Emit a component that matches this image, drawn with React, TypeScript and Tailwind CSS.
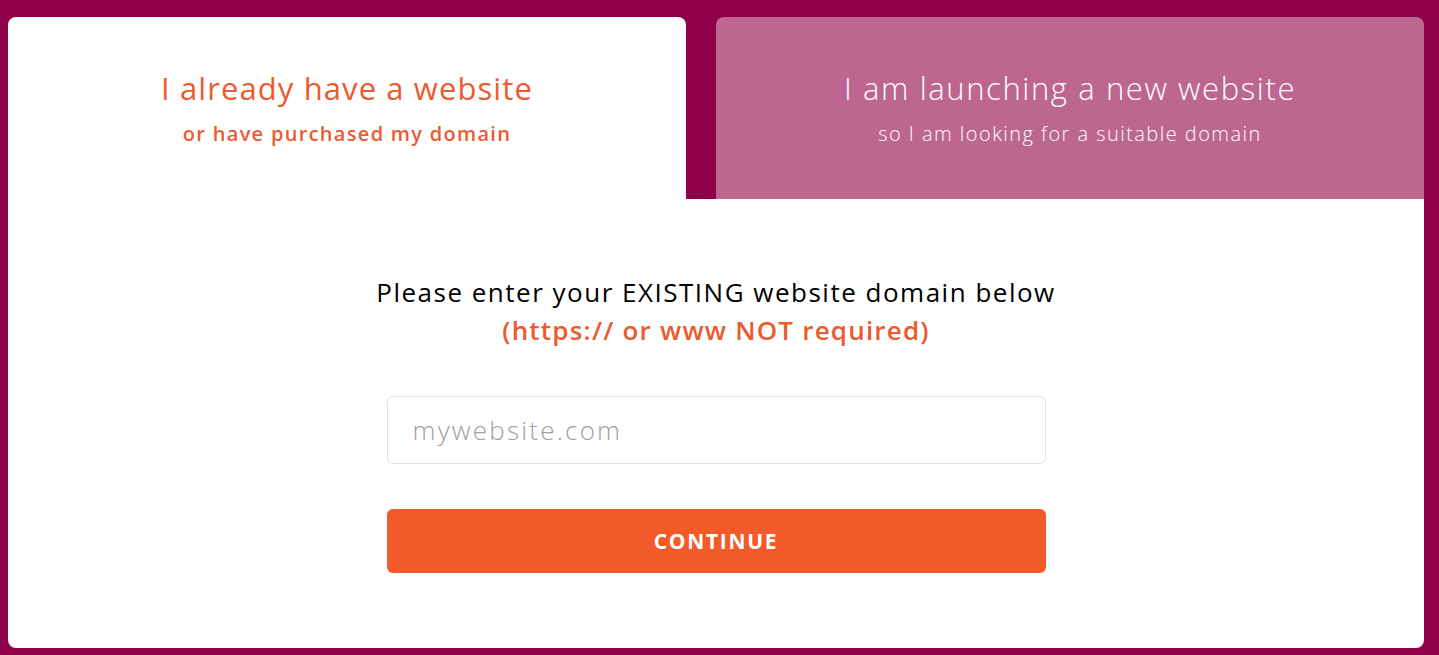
export default function App() {
  return (
    <div
      className="min-h-screen bg-[#8e0049] pt-[17px] pl-2 pr-[15px] pb-[7px]"
      style={{ fontFamily: '"Open Sans", "Liberation Sans", sans-serif' }}
    >
      {/* tabs */}
      <div className="flex gap-[30px]">
        <div className="w-[678px] h-[182px] bg-white rounded-t-lg flex flex-col items-center pt-[52px]">
          <h2 className="text-[31px] leading-[38px] font-medium tracking-[1.1px] text-[#ec5a30]">
            I already have a website
          </h2>
          <p className="mt-[14px] text-[20px] leading-[26px] font-semibold tracking-[1.3px] text-[#ec5a30]">
            or have purchased my domain
          </p>
        </div>
        <div className="flex-1 h-[182px] bg-[#bc6690] rounded-t-lg flex flex-col items-center pt-[52px]">
          <h2 className="text-[31px] leading-[38px] font-light tracking-[1.6px] text-white">
            I am launching a new website
          </h2>
          <p className="mt-[14px] text-[20px] leading-[26px] font-light tracking-[1.45px] text-white">
            so I am looking for a suitable domain
          </p>
        </div>
      </div>

      {/* panel */}
      <div className="h-[449px] bg-white rounded-b-lg flex flex-col items-center pt-[75px]">
        <p className="text-[26px] leading-[36px] tracking-[1.5px] text-black">
          Please enter your EXISTING website domain below
        </p>
        <p className="text-[26px] leading-[40px] font-semibold tracking-[1.2px] text-[#ec5a30]">
          (https:// or www NOT required)
        </p>
        <input
          type="text"
          placeholder="mywebsite.com"
          className="mt-[46px] w-[659px] h-[68px] border border-[#e2e2e2] rounded-md px-[25px] text-[26px] font-light tracking-[2.2px] text-gray-700 placeholder:text-[#a0a0a0] outline-none"
        />
        <button className="mt-[45px] w-[659px] h-[64px] bg-[#f25a29] rounded-md text-white text-[21px] font-bold tracking-[1.7px] pt-[2px]">
          CONTINUE
        </button>
      </div>
    </div>
  );
}
